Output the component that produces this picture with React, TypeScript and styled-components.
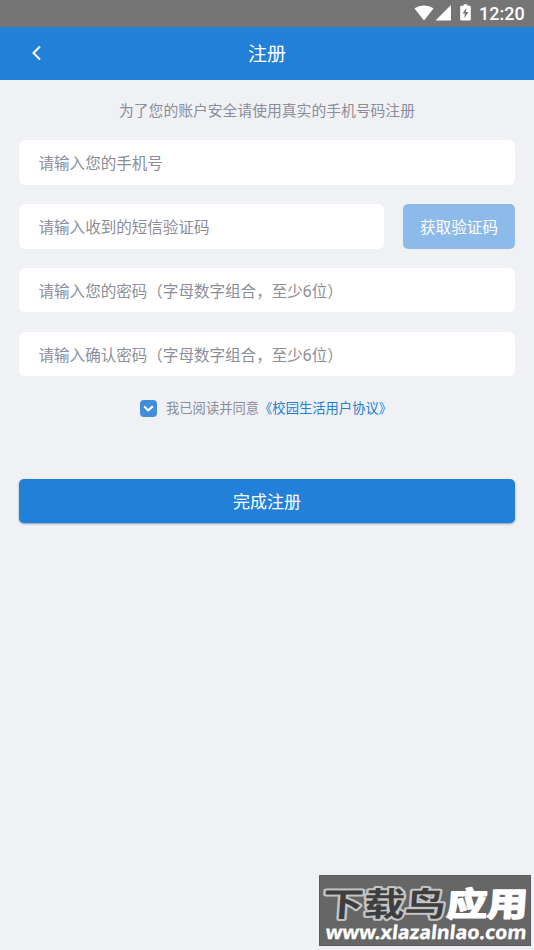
import React from "react";
import styled, { createGlobalStyle } from "styled-components";

const Global = createGlobalStyle`
  * { box-sizing: border-box; }
  body { margin: 0; background: #eff1f5; font-family: "Noto Sans", "Noto Sans CJK SC", sans-serif; }
  button, input { font: inherit; border: 0; outline: 0; margin: 0; }
`;

const Screen = styled.div`
  position: relative;
  display: flex;
  flex-direction: column;
  width: 534px;
  height: 950px;
  overflow: hidden;
  background: #eff1f5;
`;

const StatusBar = styled.div`
  display: flex;
  justify-content: flex-end;
  height: 27px;
  flex: none;
  background: #757575;
  color: #fff;
  svg { display: block; }
`;

const Clock = styled.span`
  width: 60px;
  padding-left: 5px;
  font: 500 18px/28px Roboto, sans-serif;
  white-space: nowrap;
`;

const Header = styled.header`
  display: grid;
  grid-template-columns: 72px 1fr 72px;
  align-items: center;
  flex: none;
  height: 53px;
  background: #2380d8;
  color: #fff;
`;

const BackButton = styled.button`
  display: flex;
  justify-content: center;
  padding: 0 0 1px;
  background: none;
  color: inherit;
`;

const Title = styled.h1`
  margin: 0;
  text-align: center;
  font-size: 19px;
  line-height: 28px;
  font-weight: 400;
`;

const Form = styled.main`
  display: flex;
  flex-direction: column;
  padding: 0 19px;
`;

const Hint = styled.p`
  margin: 19px 0 18px;
  text-align: center;
  font-size: 14.8px;
  line-height: 23px;
  color: #8b8e99;
`;

const Fields = styled.div`
  display: flex;
  flex-direction: column;
  gap: 19.2px;
`;

const CodeRow = styled.div`
  display: grid;
  grid-template-columns: 365px 112px;
  justify-content: space-between;
`;

const Field = styled.input`
  display: block;
  width: 100%;
  height: 44.7px;
  padding: 2px 20px 0 19.5px;
  border-radius: 6px;
  background: #fff;
  font-size: 15.55px;
  color: #444;
  &::placeholder { color: #8b8e99; opacity: 1; }
`;

const CodeButton = styled.button`
  height: 44.7px;
  padding: 0;
  border-radius: 5px;
  background: #8cbbe9;
  color: #fff;
  font-size: 15.6px;
`;

const Agreement = styled.label`
  display: flex;
  align-items: center;
  height: 20px;
  margin: 22px 0 0 121px;
  font-size: 13.3px;
  line-height: 20px;
  color: #8b8e99;
  white-space: nowrap;
`;

const CheckBox = styled.span`
  display: flex;
  align-items: center;
  justify-content: center;
  width: 17px;
  height: 17px;
  margin-right: 9px;
  border-radius: 4px;
  background: #438cda;
`;

const AgreementLink = styled.a`
  color: #2380d0;
`;

const Submit = styled.button`
  height: 44px;
  margin-top: 61px;
  padding: 0 0 2px;
  border-radius: 5px;
  background: #2380d8;
  box-shadow: 0 1px 2px rgba(20, 70, 120, 0.5);
  color: #fff;
  font-size: 17px;
`;

const Watermark = styled.aside`
  position: absolute;
  left: 319px;
  top: 875px;
  width: 212px;
  height: 71px;
  background: #666;
  border: 1px solid #5b5b5b;
  svg { display: block; overflow: visible; }
`;

const MarkText = styled.text`
  font-family: "Noto Sans CJK SC", sans-serif;
  font-weight: 700;
  font-size: 33px;
  paint-order: stroke;
  stroke-linejoin: round;
`;

const MarkUrl = styled.text`
  font-family: "Noto Sans", sans-serif;
  font-weight: 700;
  font-size: 19px;
  fill: #fff;
  stroke: #fff;
  stroke-width: 0.3px;
`;

function StatusIcons() {
  return (
    <svg width="60" height="27" viewBox="0 0 60 27" fill="#fff">
      <path d="M.5 8.6C6.5 4.3 13.5 4.3 19.5 8.6L10 20.5Z" />
      <path d="M37 5v15.5H21.5Z" />
      <path d="M49.6 4.2v1.6h-2.2q-1.2 0-1.2 1.2v12.3q0 1.2 1.2 1.2h8.2q1.2 0 1.2-1.2v-12.3q0-1.2-1.2-1.2h-2.2V4.2Z" />
      <path d="M52.5 7.8l-4 5.8h2.4l-.7 4.6 4.2-6.1h-2.5Z" fill="#757575" />
    </svg>
  );
}

export default function App() {
  return (
    <>
      <Global />
      <Screen>
        <StatusBar>
          <StatusIcons />
          <Clock>12:20</Clock>
        </StatusBar>
        <Header>
          <BackButton aria-label="返回">
            <svg width="12" height="18" viewBox="0 0 12 18" fill="none" stroke="#fff" strokeWidth="2">
              <path d="M10 2.5L3.5 9l6.5 6.5" />
            </svg>
          </BackButton>
          <Title>注册</Title>
        </Header>
        <Form>
          <Hint>为了您的账户安全请使用真实的手机号码注册</Hint>
          <Fields>
            <Field placeholder="请输入您的手机号" />
            <CodeRow>
              <Field placeholder="请输入收到的短信验证码" />
              <CodeButton>获取验证码</CodeButton>
            </CodeRow>
            <Field placeholder="请输入您的密码（字母数字组合，至少6位）" />
            <Field placeholder="请输入确认密码（字母数字组合，至少6位）" />
          </Fields>
          <Agreement>
            <CheckBox>
              <svg width="11" height="9" viewBox="0 0 11 9" fill="none" stroke="#fff" strokeWidth="2.1">
                <path d="M1.2 2.6L5.2 6.4L9.8 2.4" />
              </svg>
            </CheckBox>
            我已阅读并同意<AgreementLink>《校园生活用户协议》</AgreementLink>
          </Agreement>
          <Submit>完成注册</Submit>
        </Form>
        <Watermark>
          <svg width="210" height="69" viewBox="0 0 210 69">
            <g transform="translate(2 40) skewX(-4)">
              <MarkText textLength="123" lengthAdjust="spacingAndGlyphs" fill="#3e3e3e" stroke="#3e3e3e" strokeWidth="1.4">
                <tspan stroke="#c4c4c4" strokeWidth="4">下载鸟</tspan>
              </MarkText>
              <MarkText x="124" textLength="81" lengthAdjust="spacingAndGlyphs" fill="#fff" stroke="#fff" strokeWidth="1.8">应用</MarkText>
            </g>
            <g transform="translate(5 63) skewX(-6)">
              <MarkUrl textLength="201" lengthAdjust="spacingAndGlyphs">www.xlazalnlao.com</MarkUrl>
            </g>
          </svg>
        </Watermark>
      </Screen>
    </>
  );
}
